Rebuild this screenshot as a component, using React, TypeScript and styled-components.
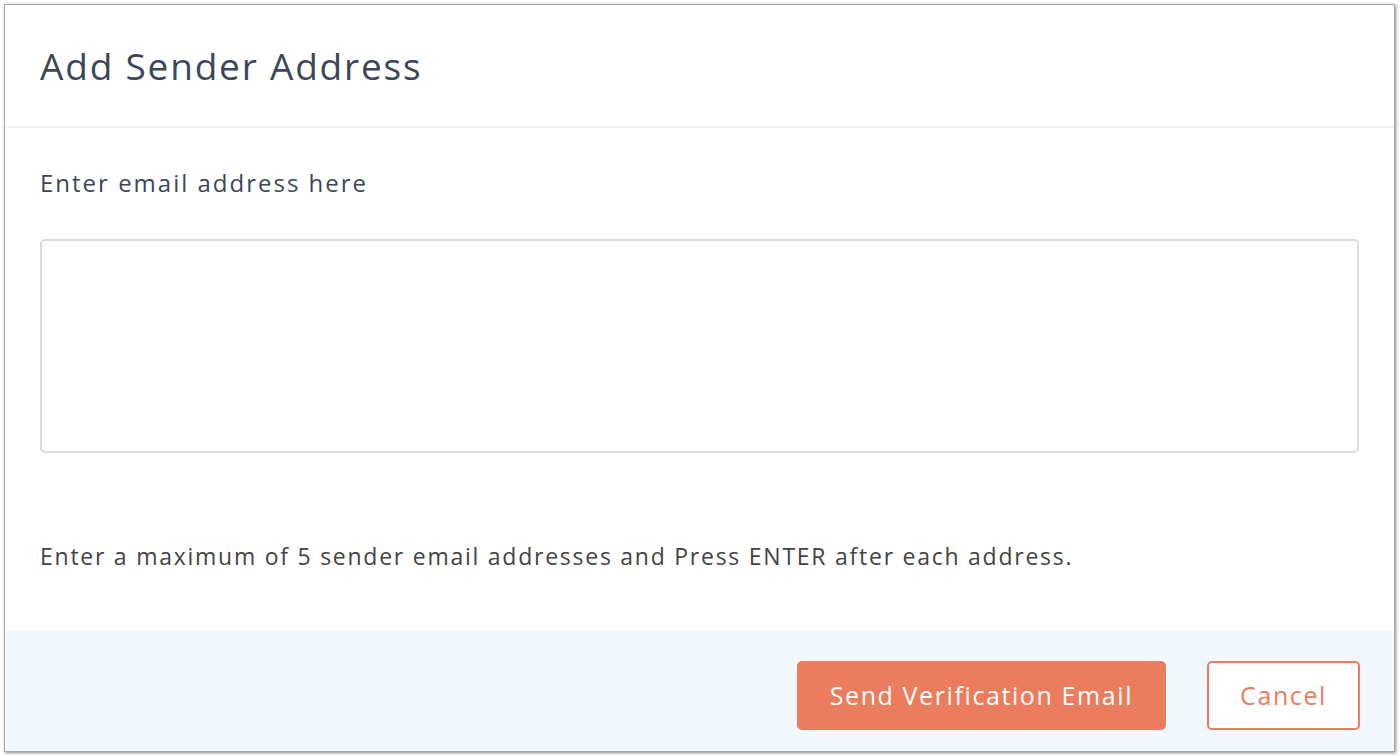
import styled, { createGlobalStyle } from "styled-components";

const GlobalStyle = createGlobalStyle`
  html, body {
    margin: 0;
    padding: 0;
    background: #ffffff;
  }
  body {
    font-family: "Open Sans", Lato, Arial, sans-serif;
    -webkit-font-smoothing: antialiased;
  }
`;

const Page = styled.div`
  padding: 4px 5px 4px 4px;
  box-sizing: border-box;
  width: 1400px;
  height: 756px;
`;

const Dialog = styled.div`
  display: flex;
  flex-direction: column;
  height: 100%;
  box-sizing: border-box;
  background: #ffffff;
  border: 1px solid #a9a9a9;
  box-shadow: 1px 1px 3px rgba(0, 0, 0, 0.45);
`;

const Header = styled.div`
  height: 123px;
  box-sizing: border-box;
  padding: 0 35px;
  display: flex;
  align-items: center;
  border-bottom: 2px solid #f1f4f7;
`;

const Title = styled.h1`
  margin: 0;
  font-size: 37px;
  font-weight: 400;
  letter-spacing: 1.8px;
  color: #3b4759;
`;

const Body = styled.div`
  flex: 1;
  padding: 40px 35px 0;
  display: flex;
  flex-direction: column;
`;

const Label = styled.label`
  font-size: 24px;
  letter-spacing: 2px;
  color: #3b4759;
  line-height: 30px;
`;

const EmailBox = styled.textarea`
  margin-top: 41px;
  height: 214px;
  box-sizing: border-box;
  border: 2px solid #dadada;
  border-radius: 5px;
  resize: none;
  outline: none;
  font-family: inherit;
  font-size: 20px;
  padding: 10px 14px;
`;

const Hint = styled.p`
  margin: 89px 0 0;
  font-size: 23px;
  letter-spacing: 1.75px;
  line-height: 28px;
  color: #444444;
`;

const Footer = styled.div`
  height: 120px;
  box-sizing: border-box;
  background: #f1f8fe;
  display: flex;
  justify-content: flex-end;
  align-items: center;
  gap: 41px;
  padding: 8px 34px 0 0;
`;

const Button = styled.button<{ $primary?: boolean }>`
  height: 69px;
  box-sizing: border-box;
  padding: 0 31px;
  border-radius: 5px;
  border: 2px solid #ec7c5e;
  background: ${(p) => (p.$primary ? "#ec7c5e" : "#ffffff")};
  color: ${(p) => (p.$primary ? "#ffffff" : "#ec7c5e")};
  font-family: inherit;
  font-size: 25px;
  letter-spacing: 1.6px;
  cursor: pointer;
`;

export default function App() {
  return (
    <>
      <GlobalStyle />
      <Page>
        <Dialog>
          <Header>
            <Title>Add Sender Address</Title>
          </Header>
          <Body>
            <Label>Enter email address here</Label>
            <EmailBox />
            <Hint>
              Enter a maximum of 5 sender email addresses and Press ENTER after
              each address.
            </Hint>
          </Body>
          <Footer>
            <Button $primary>Send Verification Email</Button>
            <Button>Cancel</Button>
          </Footer>
        </Dialog>
      </Page>
    </>
  );
}
